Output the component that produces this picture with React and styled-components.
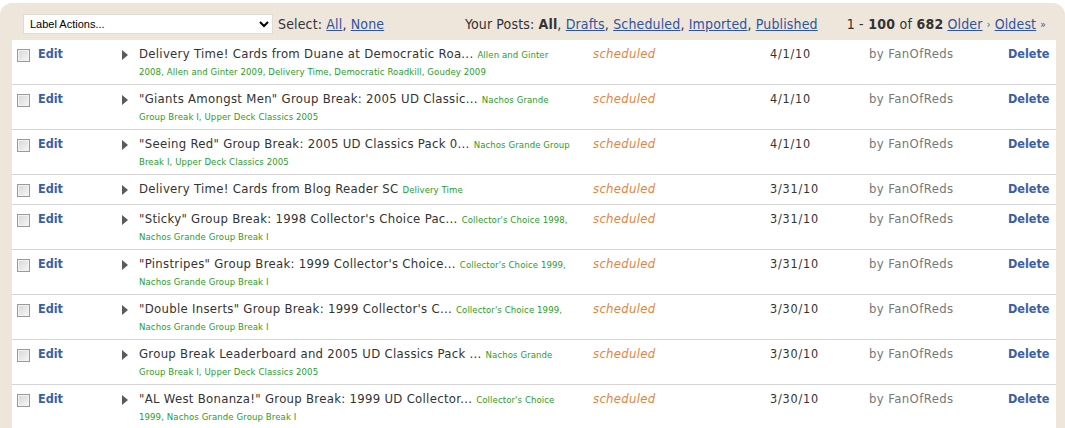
import React from "react";
import styled, { createGlobalStyle } from "styled-components";

const Global = createGlobalStyle`
  html, body { margin: 0; padding: 0; background: #ffffff; }
  body { font-family: "DejaVu Sans Condensed", "DejaVu Sans", sans-serif; color: #333; overflow: hidden; }
`;

const Panel = styled.div`
  margin-top: 3px;
  background: #eee6db;
  border-radius: 12px 12px 0 0;
  padding: 0 9px 0 12px;
  width: 1065px;
  box-sizing: border-box;
`;

const Toolbar = styled.div`
  height: 37px;
  display: flex;
  align-items: center;
  padding: 0 10px 0 11px;
  font-size: 14px;
  letter-spacing: 0.15px;
  color: #333;
  white-space: nowrap;
`;

const LabelSelect = styled.select`
  width: 250px;
  height: 20px;
  margin-top: 4px;
  font-family: "Liberation Sans", Arial, sans-serif;
  font-size: 11px;
  letter-spacing: 0;
  color: #000;
  background: #fff;
  border: 1px solid #e0dbd3;
  padding: 0 2px;
`;

const Group = styled.div`
  display: flex;
  align-items: center;
  margin-left: ${(p) => p.$ml || 0}px;
  margin-top: 5px;
`;

const Spacer = styled.div`
  flex: 1;
`;

const Link = styled.a`
  color: #2e55a2;
  text-decoration: underline;
  cursor: pointer;
`;

const Strong = styled.b`
  font-weight: bold;
  color: #333;
`;

const Sep = styled.span`
  color: #2e55a2;
  font-size: 10px;
`;

const Table = styled.div`
  background: #fff;
`;

const Row = styled.div`
  display: grid;
  grid-template-columns: 23px 83px 18px 454px 177px 99px 139px 1fr;
  border-bottom: 1px solid #d4d4d4;
  padding: 4px 0 5px;
`;

const Cell = styled.div`
  padding-left: 3px;
  font-size: 13px;
  line-height: 20px;
  white-space: nowrap;
`;

const CheckCell = styled.div`
  padding-left: 5px;
`;

const Check = styled.span`
  display: block;
  width: 11px;
  height: 11px;
  margin-top: 5px;
  border: 1px solid #9a9a9a;
  background: linear-gradient(135deg, #d6d6d6, #f7f7f7);
  box-shadow: inset 0 0 0 1px #f2f2f2;
`;

const ActionLink = styled.a`
  font-weight: bold;
  color: #3a5ea8;
  font-size: 12.5px;
  cursor: pointer;
`;

const Arrow = styled.span`
  display: block;
  width: 0;
  height: 0;
  margin: 6px 0 0 4px;
  border-top: 5px solid transparent;
  border-bottom: 5px solid transparent;
  border-left: 6px solid #5a5a5a;
`;

const TitleCell = styled.div`
  padding: 0 18px 0 3px;
  font-size: 9.5px;
  letter-spacing: 0.1px;
  line-height: 15px;
  color: #1f9e1f;
`;

const Title = styled.span`
  font-size: 13px;
  letter-spacing: 0.3px;
  line-height: 20px;
  color: #333;
  margin-right: 4px;
`;

const Tag = styled.a`
  color: #1f9e1f;
  cursor: pointer;
`;

const Status = styled(Cell)`
  font-style: italic;
  color: #e8823c;
  letter-spacing: 0.3px;
`;

const DateCell = styled(Cell)`
  color: #333;
  font-size: 12.5px;
  letter-spacing: 0.8px;
`;

const Author = styled(Cell)`
  color: #777;
  letter-spacing: 0.4px;
`;

const posts = [
  ["Delivery Time! Cards from Duane at Democratic Roa...", ["Allen and Ginter 2008", "Allen and Ginter 2009", "Delivery Time", "Democratic Roadkill", "Goudey 2009"], "4/1/10"],
  ["\"Giants Amongst Men\" Group Break: 2005 UD Classic...", ["Nachos Grande Group Break I", "Upper Deck Classics 2005"], "4/1/10"],
  ["\"Seeing Red\" Group Break: 2005 UD Classics Pack 0...", ["Nachos Grande Group Break I", "Upper Deck Classics 2005"], "4/1/10"],
  ["Delivery Time! Cards from Blog Reader SC", ["Delivery Time"], "3/31/10"],
  ["\"Sticky\" Group Break: 1998 Collector's Choice Pac...", ["Collector's Choice 1998", "Nachos Grande Group Break I"], "3/31/10"],
  ["\"Pinstripes\" Group Break: 1999 Collector's Choice...", ["Collector's Choice 1999", "Nachos Grande Group Break I"], "3/31/10"],
  ["\"Double Inserts\" Group Break: 1999 Collector's C...", ["Collector's Choice 1999", "Nachos Grande Group Break I"], "3/30/10"],
  ["Group Break Leaderboard and 2005 UD Classics Pack ...", ["Nachos Grande Group Break I", "Upper Deck Classics 2005"], "3/30/10"],
  ["\"AL West Bonanza!\" Group Break: 1999 UD Collector...", ["Collector's Choice 1999", "Nachos Grande Group Break I"], "3/30/10"],
];

export default function App() {
  return (
    <>
      <Global />
      <Panel>
        <Toolbar>
          <LabelSelect defaultValue="la">
            <option value="la">Label Actions...</option>
          </LabelSelect>
          <Group $ml={5}>
            Select:&nbsp;<Link>All</Link>,&nbsp;<Link>None</Link>
          </Group>
          <Spacer />
          <Group>
            Your Posts:&nbsp;<Strong>All</Strong>,&nbsp;<Link>Drafts</Link>,&nbsp;
            <Link>Scheduled</Link>,&nbsp;<Link>Imported</Link>,&nbsp;<Link>Published</Link>
          </Group>
          <Group $ml={29}>
            1 - <Strong>&nbsp;100&nbsp;</Strong> of <Strong>&nbsp;682</Strong>&nbsp;
            <Link>Older</Link>&nbsp;<Sep>›</Sep>&nbsp;<Link>Oldest</Link>&nbsp;<Sep>»</Sep>
          </Group>
        </Toolbar>
        <Table>
          {posts.map(([title, tags, date], i) => (
            <Row key={i}>
              <CheckCell>
                <Check />
              </CheckCell>
              <Cell>
                <ActionLink>Edit</ActionLink>
              </Cell>
              <div>
                <Arrow />
              </div>
              <TitleCell>
                <Title>{title}</Title>
                {tags.map((t, j) => (
                  <React.Fragment key={j}>
                    <Tag>{t}</Tag>
                    {j < tags.length - 1 ? ", " : ""}
                  </React.Fragment>
                ))}
              </TitleCell>
              <Status>scheduled</Status>
              <DateCell>{date}</DateCell>
              <Author>by FanOfReds</Author>
              <Cell>
                <ActionLink>Delete</ActionLink>
              </Cell>
            </Row>
          ))}
        </Table>
      </Panel>
    </>
  );
}
